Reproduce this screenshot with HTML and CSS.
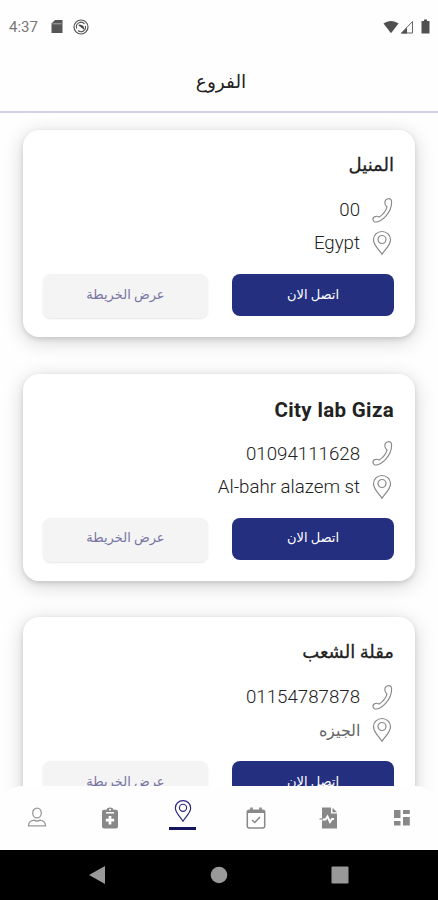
FILE: index.html
```html
<!DOCTYPE html>
<html lang="ar" dir="rtl">
<head>
    <meta charset="UTF-8">
    <meta name="viewport" content="width=device-width, initial-scale=1.0">
    <title>الفروع</title>
    <link rel="stylesheet" href="styles.css">
</head>
<body>

<svg class="sprite">
    <symbol id="icon-phone" viewBox="0 0 24 28">
        <path d="M14.500 6.500C14.300 4 15.500 2 18 1.700C20.300 1.500 21.500 2.800 21.500 5.200C21.500 10.500 19.500 15.500 15.500 19.800C12.500 23 9 25.500 5.500 26C3.500 26.300 2 24.800 2 22.900C2 21.300 3.300 20.500 5 20.100C6.500 19.700 7.500 20.300 8.500 20.800C12 18.500 15.500 14.500 16.700 10.400C15.600 9.500 14.600 8.500 14.500 6.500Z"/>
    </symbol>
    <symbol id="icon-pin" viewBox="0 0 20 26">
        <path d="M10 1.500C5.200 1.500 1.500 5.100 1.500 9.700C1.500 15.300 7.800 20.500 10 24.300C12.200 20.500 18.500 15.300 18.500 9.700C18.500 5.100 14.800 1.500 10 1.500Z"/>
        <circle cx="10" cy="9.500" r="4"/>
    </symbol>
</svg>

<div class="screen">
    <div class="status" dir="ltr">
        <span class="time">4:37</span>
        <svg class="sd" viewBox="0 0 12 15"><path d="M4 1H11.500V14H.500V4.500Z" fill="#555"/><path d="M1.500 4.800H10.500" stroke="#aaa" stroke-width="1"/></svg>
        <svg class="sync" viewBox="0 0 16 16" fill="none" stroke="#555"><circle cx="8" cy="8" r="7" stroke-width="1.200"/><path d="M3.800 9.500A4.500 4.500 0 0 1 11.500 5M12.300 6.800A4.500 4.500 0 0 1 5 11.500" stroke-width="1.100"/><path d="M5 6L11.500 11L10.500 7L7 5.500Z" fill="#444" stroke="none"/></svg>
        <div class="signals">
            <svg width="16" height="14" viewBox="0 0 16 14"><path d="M.500 3.500C5 0 11 0 15.500 3.500L8 13.200Z" fill="#505050"/></svg>
            <svg width="14" height="14" viewBox="0 0 14 14"><path d="M12.500 1.500V13H1.500Z" fill="none" stroke="#666"/><path d="M1 13.500L7 7.500V13.500Z" fill="#505050"/></svg>
            <svg width="9" height="15" viewBox="0 0 9 15"><path d="M3 .500H6V2H8.500V14.500H.500V2H3Z" fill="#505050"/></svg>
        </div>
    </div>

    <header class="header">
        <h1>الفروع</h1>
    </header>

    <main class="list">
        <div class="card">
            <h2>المنيل</h2>
            <div class="info"><svg class="icon phone"><use href="#icon-phone"/></svg><span dir="ltr">00</span></div>
            <div class="info"><svg class="icon pin"><use href="#icon-pin"/></svg><span dir="ltr">Egypt</span></div>
            <div class="buttons">
                <button class="btn call">اتصل الان</button>
                <button class="btn map">عرض الخريطة</button>
            </div>
        </div>
        <div class="card">
            <h2 class="latin" dir="ltr">City lab Giza</h2>
            <div class="info"><svg class="icon phone"><use href="#icon-phone"/></svg><span dir="ltr">01094111628</span></div>
            <div class="info"><svg class="icon pin"><use href="#icon-pin"/></svg><span dir="ltr">Al-bahr alazem st</span></div>
            <div class="buttons">
                <button class="btn call">اتصل الان</button>
                <button class="btn map">عرض الخريطة</button>
            </div>
        </div>
        <div class="card">
            <h2>مقلة الشعب</h2>
            <div class="info"><svg class="icon phone"><use href="#icon-phone"/></svg><span dir="ltr">01154787878</span></div>
            <div class="info"><svg class="icon pin"><use href="#icon-pin"/></svg><span class="arabic">الجيزه</span></div>
            <div class="buttons">
                <button class="btn call">اتصل الان</button>
                <button class="btn map">عرض الخريطة</button>
            </div>
        </div>
    </main>

    <nav class="tabs">
        <a class="tab"><svg width="18" height="18" viewBox="0 0 18 18" fill="#888"><path d="M1 1H7.500V9H1ZM10 1H16.800V5H10ZM10 8H16.800V16.500H10ZM1 12H7.500V16.500H1Z"/></svg></a>
        <a class="tab"><svg width="20" height="22" viewBox="0 0 20 22"><path d="M3 .500H12V6.500H18V21.500H3Z" fill="#888"/><path d="M13.500 .800L18 5.200H13.500Z" fill="#888"/><path d="M1 12.500H6.500L8.500 9.500L11 15L13 12H15" fill="none" stroke="#fff" stroke-width="1.900"/><path d="M.500 12H4" stroke="#888" stroke-width="1.200"/></svg></a>
        <a class="tab"><svg width="20" height="22" viewBox="0 0 20 22" fill="none" stroke="#888"><rect x="1.300" y="3.200" width="17.400" height="17.800" rx="2" stroke-width="1.500"/><path d="M1.500 4.500H18.500" stroke-width="3"/><path d="M5.500 .500V4M14.500 .500V4" stroke-width="2.500"/><path d="M6 13L8.800 15.500L14 10" stroke-width="1.600"/></svg></a>
        <a class="tab active"><svg class="pin"><use href="#icon-pin"/></svg></a>
        <a class="tab"><svg width="18" height="22" viewBox="0 0 18 22"><path d="M3 2.800H5.500C6 -.300 12 -.300 12.500 2.800H15Q17 2.800 17 4.800V19.500Q17 21.500 15 21.500H3Q1 21.500 1 19.500V4.800Q1 2.800 3 2.800Z" fill="#888"/><path d="M5 5.800H13" stroke="#fff" stroke-width="1.500"/><path d="M9 9V17.500M4.800 13.200H13.200" stroke="#fff" stroke-width="2.700"/><circle cx="9" cy="2.800" r="1" fill="#fff"/></svg></a>
        <a class="tab"><svg width="20" height="22" viewBox="0 0 20 22" fill="none" stroke="#999" stroke-width="1.300"><ellipse cx="10" cy="6" rx="4.300" ry="4.900"/><path d="M1.500 18.800C1.500 15.400 3.500 13.600 7 13.100Q10 14.900 13 13.100C16.500 13.600 18.500 15.400 18.500 18.800Z"/></svg></a>
    </nav>

    <div class="system" dir="ltr">
        <svg width="18" height="20" viewBox="0 0 18 20"><path d="M17 1V19L1 10Z" fill="#999"/></svg>
        <svg width="18" height="18" viewBox="0 0 18 18"><circle cx="9" cy="9" r="8.300" fill="#999"/></svg>
        <svg width="18" height="18" viewBox="0 0 18 18"><rect x=".500" y=".500" width="17" height="17" rx="1" fill="#999"/></svg>
    </div>
</div>

</body>
</html>
```
FILE: styles.css
```css
* {
    box-sizing: border-box;
}
body {
    margin: 0;
    background: #fefefe;
    font-family: Roboto, "DejaVu Sans", sans-serif;
    color: #222;
}
.sprite {
    display: none;
}
.screen {
    height: 900px;
    display: flex;
    flex-direction: column;
    overflow: hidden;
}
.status {
    height: 53px;
    flex-shrink: 0;
    display: flex;
    align-items: center;
    padding: 0 8px 0 9px;
}
.time {
    width: 42px;
    font-size: 15px;
    color: #777;
}
.sd {
    width: 12px;
    height: 15px;
}
.sync {
    width: 16px;
    height: 16px;
    margin-left: 10px;
}
.signals {
    display: flex;
    align-items: center;
    margin-left: auto;
}
.signals svg:nth-child(2) {
    margin-left: 1px;
}
.signals svg:last-child {
    margin-left: 7px;
}
.header {
    height: 60px;
    flex-shrink: 0;
    border-bottom: 2px solid #d3d0e5;
    display: flex;
    align-items: center;
    justify-content: center;
    padding-left: 4px;
}
h1 {
    margin: 0;
    font-size: 18.500px;
    font-weight: normal;
}
.list {
    flex: 1;
    min-height: 0;
    overflow: hidden;
    padding: 17px 23px 0;
    margin-bottom: -24px;
}
.card {
    height: 207px;
    margin-bottom: 36.600px;
    padding: 19px 21px 0 20px;
    background: white;
    border-radius: 16px;
    box-shadow: 0 4px 20px rgba(0, 0, 0, 0.18), 0 2px 5px rgba(0, 0, 0, 0.12);
}
h2 {
    margin: 0 0 11px;
    height: 33px;
    line-height: 31px;
    font-size: 18px;
    font-weight: normal;
    -webkit-text-stroke: 0.300px #222;
}
h2.latin {
    text-align: right;
    font-size: 20.500px;
    font-weight: bold;
    letter-spacing: 0.350px;
    line-height: 35px;
    -webkit-text-stroke: 0;
}
.info {
    height: 33px;
    display: flex;
    align-items: center;
    padding-top: 1px;
    font-size: 18.700px;
    font-weight: 300;
    color: #222;
}
.icon {
    fill: none;
    stroke: #888;
    stroke-width: 1.200;
    margin-left: 11px;
}
.phone {
    width: 23px;
    height: 27px;
}
.pin {
    width: 20px;
    height: 26px;
}
.icon.pin {
    margin: 0 2px 0 12px;
}
.arabic {
    font-size: 16px;
    color: #666;
}
.buttons {
    display: flex;
    justify-content: space-between;
    margin-top: 15px;
}
.btn {
    height: 42px;
    padding: 0 0 2px;
    border: none;
    border-radius: 8px;
    font-family: inherit;
    font-size: 13px;
}
.call {
    width: 162px;
    background: #252f7f;
    color: white;
}
.map {
    width: 165px;
    height: 44px;
    padding-bottom: 4px;
    background: #f4f4f4;
    color: #7775a5;
    box-shadow: 0 1px 2px rgba(0, 0, 0, 0.1);
}
.tabs {
    position: relative;
    height: 64px;
    flex-shrink: 0;
    display: flex;
    background: #fefefe;
    border-radius: 22px 22px 0 0;
}
.tab {
    flex: 1;
    display: flex;
    align-items: center;
    justify-content: center;
}
.active {
    flex-direction: column;
    justify-content: flex-start;
    padding-top: 13px;
}
.active .pin {
    width: 18px;
    height: 24px;
    fill: none;
    stroke: #28287a;
    stroke-width: 1.300;
}
.active::after {
    content: "";
    width: 27px;
    height: 3px;
    margin-top: 4px;
    background: #14145f;
}
.system {
    height: 50px;
    flex-shrink: 0;
    background: black;
    display: flex;
    align-items: center;
    justify-content: space-between;
    padding: 0 89px 0 88px;
}
```
